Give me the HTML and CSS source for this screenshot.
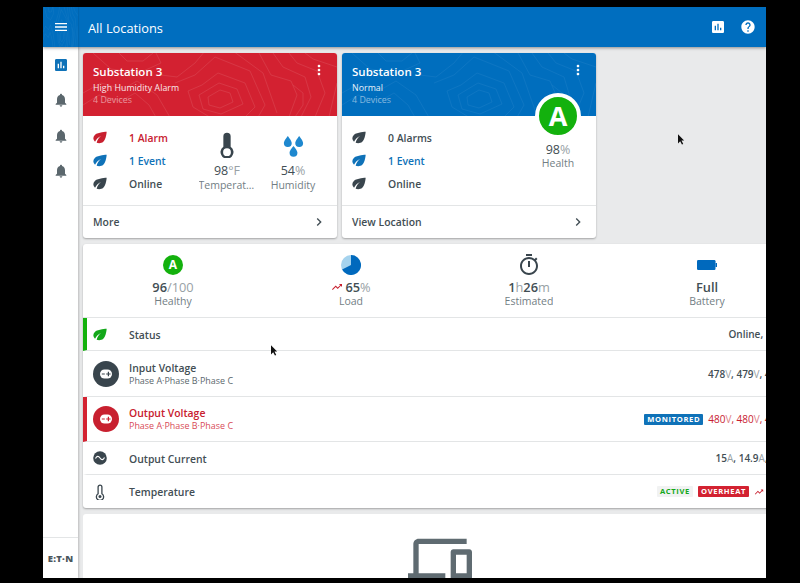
FILE: index.html
```html
<!DOCTYPE html>
<html lang="en">
<head>
<meta charset="utf-8">
<title>All Locations</title>
<link rel="stylesheet" href="styles.css">
</head>
<body>
<svg class="defs" width="0" height="0" aria-hidden="true">
  <defs>
    <symbol id="topo" viewBox="0 0 254 63" preserveAspectRatio="none">
      <g fill="none" stroke="#fff" stroke-width=".6">
        <path d="M125 44l12-7 10 3 3 9-13 6-11-3z"/>
        <path d="M116 42l20-12 18 6 6 15-22 10-18-5z"/>
        <path d="M105 38l14-6 16-12 27 10 10 24-12 12-30 0-20-12z"/>
        <path d="M92 30l20-8 20-18 35 14 15 34-8 14"/>
        <path d="M78 22l16 2 18-14 10-12M150-2l30 22 14 40"/>
        <path d="M0 40l18-10 22 6 14-8 20 14 14 24"/>
        <path d="M0 52l16-10 22 6 14-8 14 12 8 14"/>
        <path d="M10 0l18 16 28 4 22-10-6-12"/>
        <path d="M36 0l8 8 16 0 10-8"/>
        <path d="M176 0l12 22 20 6 6 14-8 22"/>
        <path d="M190 0l10 14 22 10 6 20-10 20"/>
        <path d="M206 0l8 10 20 8 8 22-10 24"/>
        <path d="M222 0l8 6 24 8M254 30l-8 34"/>
        <path d="M210 32l10 8 0 12-8 12"/>
      </g>
    </symbol>
    <symbol id="leaf" viewBox="0 0 24 24" preserveAspectRatio="none"><path d="M6.050 8.050c-2.730 2.730-2.730 7.150-.02 9.880 1.470-3.400 4.090-6.240 7.360-7.930-2.770 2.340-4.710 5.610-5.390 9.320 2.600 1.230 5.800.78 7.950-1.370C19.430 14.470 20 4 20 4S9.530 4.570 6.050 8.050z"/></symbol>
    <symbol id="bell" viewBox="0 0 24 24"><path d="M12 22c1.100 0 2-.9 2-2h-4c0 1.100.89 2 2 2zm6-6v-5c0-3.070-1.640-5.640-4.500-6.320V4c0-.83-.67-1.500-1.500-1.500s-1.500.67-1.500 1.500v.68C7.630 5.360 6 7.920 6 11v5l-2 2v1h16v-1l-2-2z"/></symbol>
    <symbol id="assess" viewBox="0 0 24 24"><path d="M19 3H5c-1.100 0-2 .9-2 2v14c0 1.100.9 2 2 2h14c1.100 0 2-.9 2-2V5c0-1.100-.9-2-2-2zM9 17H7v-7h2v7zm4 0h-2V7h2v10zm4 0h-2v-4h2v4z"/></symbol>
    <symbol id="more" viewBox="0 0 24 24"><path d="M12 8c1.100 0 2-.9 2-2s-.9-2-2-2-2 .9-2 2 .9 2 2 2zm0 2c-1.100 0-2 .9-2 2s.9 2 2 2 2-.9 2-2-.9-2-2-2zm0 6c-1.100 0-2 .9-2 2s.9 2 2 2 2-.9 2-2-.9-2-2-2z"/></symbol>
    <symbol id="chev" viewBox="0 0 24 24"><path d="M10 6L8.590 7.410 13.170 12l-4.580 4.590L10 18l6-6z"/></symbol>
    <symbol id="trend" viewBox="0 0 24 24"><path d="M16 6l2.290 2.290-4.880 4.880-4-4L2 16.590 3.410 18l6-6 4 4 6.300-6.290L22 12V6z"/></symbol>
    <symbol id="thermo" viewBox="0 0 24 32"><path fill-rule="evenodd" d="M12 1a4.500 4.500 0 0 0-4.500 4.500v12.600a8 8 0 1 0 9 0V5.500A4.500 4.500 0 0 0 12 1zM12 20a4.800 4.800 0 1 1 0 9.600 4.800 4.800 0 0 1 0-9.600z"/></symbol>
    <symbol id="volt" viewBox="0 0 26 26"><circle cx="13" cy="13" r="13"/><rect x="7" y="8.500" width="12" height="9" rx="4.500" fill="#fff"/><path d="M8.800 12.400h3v1.200h-3zM13.200 12.400h1.600v-1.600H16v1.600h1.600v1.200H16v1.600h-1.200v-1.600h-1.600z"/></symbol>
    <symbol id="cursor" viewBox="0 0 8 12"><path d="M0 0l7 7H4l2 4-1.500.8L2.500 8 0 10.500z"/></symbol>
  </defs>
</svg>

<div class="frame">
  <header class="topbar">
    <div class="topbar-nav">
      <svg class="topo" aria-hidden="true"><use href="#topo"/></svg>
      <svg class="i16 white" viewBox="0 0 24 24"><path d="M3 18h18v-2H3v2zm0-5h18v-2H3v2zm0-7v2h18V6H3z"/></svg>
    </div>
    <h1 class="topbar-title">All Locations</h1>
    <div class="topbar-actions">
      <svg class="i16 white"><use href="#assess"/></svg>
      <svg class="i16 white" viewBox="0 0 24 24"><path d="M12 2C6.480 2 2 6.480 2 12s4.480 10 10 10 10-4.480 10-10S17.520 2 12 2zm1 17h-2v-2h2v2zm2.070-7.750l-.9.920C13.450 12.900 13 13.500 13 15h-2v-.5c0-1.100.45-2.100 1.170-2.830l1.240-1.260c.37-.36.59-.86.59-1.410 0-1.100-.9-2-2-2s-2 .9-2 2H8c0-2.210 1.790-4 4-4s4 1.790 4 4c0 .88-.36 1.680-.93 2.250z"/></svg>
    </div>
  </header>

  <div class="shell">
    <nav class="rail">
      <ul class="rail-list">
        <li><svg class="i16 blue"><use href="#assess"/></svg></li>
        <li><svg class="i16 slate"><use href="#bell"/></svg></li>
        <li><svg class="i16 slate"><use href="#bell"/></svg></li>
        <li><svg class="i16 slate"><use href="#bell"/></svg></li>
      </ul>
      <div class="rail-foot"><span class="logo">E:T·N</span></div>
    </nav>

    <main class="main">
      <section class="cards">
        <article class="card">
          <div class="card-head red-bg">
            <svg class="topo" aria-hidden="true"><use href="#topo"/></svg>
            <div class="head-text">
              <h2>Substation 3</h2>
              <p>High Humidity Alarm</p>
              <p class="faint">4 Devices</p>
            </div>
            <svg class="i16 white kebab"><use href="#more"/></svg>
          </div>
          <div class="card-body">
            <ul class="status-list">
              <li class="red"><svg class="leaf"><use href="#leaf"/></svg>1 Alarm</li>
              <li class="blue"><svg class="leaf"><use href="#leaf"/></svg>1 Event</li>
              <li><svg class="leaf"><use href="#leaf"/></svg>Online</li>
            </ul>
            <div class="stat">
              <svg class="stat-ic" viewBox="0 0 24 32"><use href="#thermo"/></svg>
              <div class="num">98<span class="unit">°F</span></div>
              <div class="lbl">Temperature</div>
            </div>
            <div class="stat">
              <svg class="stat-ic drops" viewBox="0 0 24 25"><path d="M5.500 1S1 6.500 1 9.200a4.500 4.500 0 0 0 9 0C10 6.500 5.500 1 5.500 1zM18.500 1S14 6.500 14 9.200a4.500 4.500 0 0 0 9 0C23 6.500 18.500 1 18.500 1zM12 12.500s-4.500 5-4.500 7.700a4.500 4.500 0 0 0 9 0c0-2.700-4.500-7.700-4.500-7.700z"/></svg>
              <div class="num">54<span class="unit">%</span></div>
              <div class="lbl">Humidity</div>
            </div>
          </div>
          <div class="card-foot"><span>More</span><svg class="i16"><use href="#chev"/></svg></div>
        </article>

        <article class="card">
          <div class="card-head blue-bg">
            <svg class="topo topo-soft" aria-hidden="true"><use href="#topo"/></svg>
            <div class="head-text">
              <h2>Substation 3</h2>
              <p>Normal</p>
              <p class="faint">4 Devices</p>
            </div>
            <svg class="i16 white kebab"><use href="#more"/></svg>
          </div>
          <div class="card-body">
            <ul class="status-list">
              <li><svg class="leaf"><use href="#leaf"/></svg>0 Alarms</li>
              <li class="blue"><svg class="leaf"><use href="#leaf"/></svg>1 Event</li>
              <li><svg class="leaf"><use href="#leaf"/></svg>Online</li>
            </ul>
            <div class="stat stat-grade">
              <div class="grade">A</div>
              <div class="num">98<span class="unit">%</span></div>
              <div class="lbl">Health</div>
            </div>
          </div>
          <div class="card-foot"><span>View Location</span><svg class="i16"><use href="#chev"/></svg></div>
        </article>
      </section>

      <section class="panel">
        <div class="kpis">
          <div class="kpi">
            <div class="kpi-ic"><span class="grade-sm">A</span></div>
            <div class="kpi-num"><b>96</b><span class="unit">/100</span></div>
            <div class="lbl">Healthy</div>
          </div>
          <div class="kpi">
            <div class="kpi-ic">
              <svg class="i20" viewBox="0 0 20 20"><circle cx="10" cy="10" r="10" fill="#a5d3ee"/><path d="M10 10V0a10 10 0 1 1-8.900 14.500z" fill="#0069bd"/></svg>
            </div>
            <div class="kpi-num"><svg class="i12 red"><use href="#trend"/></svg><b>65</b><span class="unit">%</span></div>
            <div class="lbl">Load</div>
          </div>
          <div class="kpi">
            <div class="kpi-ic">
              <svg class="i24 ink" viewBox="0 0 24 24"><path d="M15 1H9v2h6V1zm-4 13h2V8h-2v6zm8.030-6.610l1.420-1.420c-.43-.51-.9-.99-1.410-1.410l-1.420 1.420C16.070 4.740 14.120 4 12 4c-4.970 0-9 4.030-9 9s4.020 9 9 9 9-4.030 9-9c0-2.120-.74-4.070-1.970-5.610zM12 20c-3.870 0-7-3.130-7-7s3.130-7 7-7 7 3.130 7 7-3.130 7-7 7z"/></svg>
            </div>
            <div class="kpi-num"><b>1</b><span class="unit">h</span><b>26</b><span class="unit">m</span></div>
            <div class="lbl">Estimated</div>
          </div>
          <div class="kpi">
            <div class="kpi-ic">
              <svg class="batt" viewBox="0 0 20 10"><rect width="18.500" height="10" rx="1.200"/><rect x="18.500" y="3" width="1.500" height="4"/></svg>
            </div>
            <div class="kpi-num"><b>Full</b></div>
            <div class="lbl">Battery</div>
          </div>
        </div>

        <div class="row row-s bar-green">
          <div class="row-ic"><svg class="leaf green"><use href="#leaf"/></svg></div>
          <div class="row-text"><div class="row-title">Status</div></div>
          <div class="row-val">Online, ESS+</div>
        </div>
        <div class="row row-l row-in">
          <div class="row-ic"><svg class="i26 ink"><use href="#volt"/></svg></div>
          <div class="row-text">
            <div class="row-title">Input Voltage</div>
            <div class="row-sub">Phase A·Phase B·Phase C</div>
          </div>
          <div class="row-val">478<span class="unit">V</span>, 479<span class="unit">V</span>, 480<span class="unit">V</span></div>
        </div>
        <div class="row row-l bar-red red">
          <div class="row-ic"><svg class="i26 red"><use href="#volt"/></svg></div>
          <div class="row-text">
            <div class="row-title">Output Voltage</div>
            <div class="row-sub">Phase A·Phase B·Phase C</div>
          </div>
          <span class="chip chip-blue">MONITORED</span>
          <div class="row-val">480<span class="unit">V</span>, 480<span class="unit">V</span>, 480<span class="unit">V</span></div>
        </div>
        <div class="row row-s">
          <div class="row-ic">
            <svg class="i14" viewBox="0 0 14 14"><circle cx="7" cy="7" r="6.800" fill="#39454d"/><path d="M2.500 7.500c1.200-2.800 3-2.800 4.500-.5s3.300 2.300 4.500-.5" fill="none" stroke="#fff" stroke-width="1.100"/></svg>
          </div>
          <div class="row-text"><div class="row-title">Output Current</div></div>
          <div class="row-val">15<span class="unit">A</span>, 14.9<span class="unit">A</span>, 15<span class="unit">A</span></div>
        </div>
        <div class="row row-s">
          <div class="row-ic">
            <svg class="thermo-sm" viewBox="0 0 10 16"><path d="M5 1.200a1.900 1.900 0 0 0-1.900 1.900v6.700a3.600 3.600 0 1 0 3.800 0V3.100A1.900 1.900 0 0 0 5 1.200z" fill="#fff" stroke="#39454d" stroke-width="1.300"/><circle cx="5" cy="12.600" r="1.500" fill="#39454d"/></svg>
          </div>
          <div class="row-text"><div class="row-title">Temperature</div></div>
          <span class="chip chip-green">ACTIVE</span>
          <span class="chip chip-red">OVERHEAT</span>
          <svg class="red trend-gap"><use href="#trend"/></svg>
          <div class="row-val">98<span class="unit">°F</span></div>
        </div>
      </section>

      <section class="empty">
        <svg class="devices" viewBox="0 0 24 24"><path d="M4 6h18V4H4c-1.100 0-2 .9-2 2v11H0v3h14v-3H4V6zm19 2h-6c-.55 0-1 .45-1 1v10c0 .55.45 1 1 1h6c.55 0 1-.45 1-1V9c0-.55-.45-1-1-1zm-1 9h-4v-7h4v7z"/></svg>
      </section>
    </main>
  </div>

  <svg class="cursor cursor-a"><use href="#cursor"/></svg>
  <svg class="cursor cursor-b"><use href="#cursor"/></svg>
</div>
</body>
</html>
```
FILE: styles.css
```css
* { box-sizing: border-box; }
html, body { margin: 0; height: 100%; background: #000; overflow: hidden; }
body {
  font-family: "Open Sans", "Noto Sans", sans-serif;
  color: #424e54;
  padding: 7px 34px 5px 43px;
}
ul { list-style: none; margin: 0; padding: 0; }
h1, h2, p { margin: 0; font-weight: 400; }
svg { display: block; flex: none; fill: currentColor; }
.defs { position: absolute; }

.i12 { width: 12px; height: 12px; }
.i14 { width: 14px; height: 14px; }
.i16 { width: 16px; height: 16px; }
.i20 { width: 20px; height: 20px; }
.i24 { width: 24px; height: 24px; }
.i26 { width: 26px; height: 26px; }
.leaf { width: 20px; height: 17px; }
.white { color: #fff; }
.blue { color: #0f72b8; }
.red { color: #c8202f; }
.green { color: #13a81a; }
.slate { color: #5b676d; }
.ink { color: #39454d; }

.frame {
  position: relative;
  height: 100%;
  display: flex;
  flex-direction: column;
  background: #e9eaeb;
  overflow: hidden;
}

.topbar {
  position: relative;
  z-index: 2;
  height: 40px;
  flex: none;
  display: flex;
  align-items: center;
  background: #006ebf;
  color: #fff;
  box-shadow: 0 1px 3px rgba(0, 0, 0, .4);
}
.topbar-nav {
  position: relative;
  width: 35px;
  height: 100%;
  display: flex;
  align-items: center;
  justify-content: center;
  box-shadow: 1px 0 1px rgba(0, 0, 0, .08);
}
.topbar-title { margin: 1px 0 0 10px; font-size: 12.800px; line-height: 18px; }
.topbar-actions { margin-left: auto; margin-right: 10px; display: flex; gap: 14px; }
.topo { position: absolute; inset: 0; width: 100%; height: 100%; opacity: .16; }
.topo-soft { opacity: .09; }

.shell { flex: 1; min-height: 0; display: flex; }

.rail {
  width: 35px;
  flex: none;
  display: flex;
  flex-direction: column;
  background: #fff;
  box-shadow: 1px 0 2px rgba(0, 0, 0, .2);
}
.rail-list { flex: 1; }
.rail-list li { height: 35.500px; display: flex; align-items: center; justify-content: center; }
.rail-foot {
  height: 41px;
  border-top: 1px solid #e3e5e6;
  display: flex;
  align-items: center;
  justify-content: center;
}
.logo { font-size: 9.500px; font-weight: 800; letter-spacing: .3px; color: #4b565c; }

.main { flex: 1; min-width: 0; padding: 6px 0 0 5px; display: flex; flex-direction: column; gap: 6px; }

.cards { display: flex; gap: 5px; }
.card {
  width: 254px;
  height: 185px;
  background: #fff;
  border-radius: 3px;
  box-shadow: 0 1px 2px rgba(0, 0, 0, .3);
  display: flex;
  flex-direction: column;
}
.card-head {
  position: relative;
  height: 63px;
  flex: none;
  padding: 11px 10px;
  color: #fff;
  border-radius: 3px 3px 0 0;
  display: flex;
  justify-content: space-between;
  overflow: hidden;
}
.red-bg { background: #d32231; }
.blue-bg { background: #006ebf; }
.head-text { position: relative; }
.head-text h2 { font-size: 11.500px; font-weight: 550; line-height: 15px; margin-bottom: 3px; }
.head-text p { font-size: 8.800px; line-height: 12px; opacity: .9; letter-spacing: .05px; }
.head-text .faint { opacity: .5; }
.kebab { position: relative; margin-top: -2px; }

.card-body { flex: 1; display: flex; padding: 10px 5px 0 10px; min-height: 0; border-bottom: 1px solid #e3e5e6; }
.status-list { flex: 1; }
.status-list li {
  height: 23px;
  display: flex;
  align-items: center;
  gap: 19px;
  font-size: 10.400px;
  font-weight: 550;
}
.status-list li svg { margin-left: -3px; }
.status-list li:not(.red):not(.blue) svg { color: #39454d; }
.status-list .red { color: #c8202f; }
.status-list .blue { color: #0f72b8; }

.stat { width: 66px; display: flex; flex-direction: column; align-items: center; text-align: center; }
.stat:last-child { margin-right: 6px; }
.stat-ic { width: 24px; height: 26px; color: #39454d; margin-top: 6px; }
.drops { color: #1e88cf; width: 21px; height: 22px; margin: 9px 0 1px; }
.num { font-size: 12.500px; line-height: 15px; margin-top: 5px; }
.unit { color: #98a1a5; font-weight: 400; }
.lbl {
  font-size: 10.500px;
  line-height: 14px;
  color: #727e84;
  width: 57px;
  white-space: nowrap;
  overflow: hidden;
  text-overflow: ellipsis;
}
.stat-grade { position: relative; margin-top: -33px; }
.stat-grade:last-child { margin-right: 0; }
.grade {
  width: 46px;
  height: 46px;
  border-radius: 50%;
  background: #13b10d;
  border: 4px solid #fff;
  color: #fff;
  font-size: 27px;
  font-weight: 700;
  line-height: 37px;
  text-align: center;
}
.stat-grade .num { margin-top: 4px; line-height: 14px; }
.stat-grade .lbl { margin-top: -1px; }

.card-foot {
  height: 32px;
  flex: none;
  padding: 0 10px;
  display: flex;
  align-items: center;
  justify-content: space-between;
  font-size: 10.400px;
  font-weight: 550;
}

.panel {
  width: 713px;
  flex: none;
  background: #fff;
  border-radius: 3px;
  box-shadow: 0 1px 2px rgba(0, 0, 0, .3);
  overflow: hidden;
}
.kpis { display: flex; height: 74px; padding-left: 1px; border-bottom: 1px solid #e3e5e6; }
.kpi { width: 178px; display: flex; flex-direction: column; align-items: center; padding-top: 10px; }
.kpi .lbl { width: auto; margin-top: -2px; }
.kpi-ic { height: 22px; display: flex; align-items: center; justify-content: center; }
.kpi-num { font-size: 12.800px; line-height: 18px; margin-top: 2px; display: flex; align-items: center; }
.kpi-num b { font-weight: 550; }
.kpi-num svg { margin-right: 2px; }
.grade-sm {
  width: 20px;
  height: 20px;
  border-radius: 50%;
  background: #13b10d;
  color: #fff;
  font-size: 12px;
  font-weight: 700;
  line-height: 20px;
  text-align: center;
}
.batt { width: 20px; height: 10px; color: #0069bd; }

.row {
  display: flex;
  align-items: center;
  padding-right: 8px;
  border-bottom: 1px solid #e3e5e6;
  border-left: 4px solid transparent;
}
.row:last-child { border-bottom: 0; }
.row-s { height: 33px; }
.row-l { height: 45px; }
.row-in { height: 46px; }
.bar-green { border-left-color: #13b10d; }
.bar-red { border-left-color: #d32231; }
.row-ic { width: 42px; padding-left: 6px; display: flex; align-items: center; }
.row-ic .leaf { margin-left: -3px; }
.row-text { flex: 1; }
.row-s .row-text { padding-top: 1px; }
.row-title { font-size: 10.400px; line-height: 14px; font-weight: 550; }
.row-sub { font-size: 8.950px; line-height: 12px; color: #5b676d; }
.bar-red .row-sub { color: #d84b57; }
.row-val { font-size: 10px; font-weight: 550; white-space: nowrap; }
.row.red .row-val { font-weight: 500; }
.row.red .unit { color: #dd7f87; }
.thermo-sm { width: 10px; height: 16px; margin-left: 2px; }

.chip {
  font-size: 7.600px;
  font-weight: 700;
  letter-spacing: .65px;
  line-height: 11px;
  padding: 0 3px;
  border-radius: 1px;
  margin-right: 5px;
}
.chip-blue { background: #0f72b8; color: #fff; }
.chip-red { background: #d32231; color: #fff; }
.chip-green { background: #f1f2f2; color: #13a81a; }
.trend-gap { margin-right: 3px; width: 10px; height: 10px; }

.empty {
  width: 713px;
  flex: 1;
  min-height: 70px;
  background: #fff;
  border-radius: 3px 3px 0 0;
  display: flex;
  justify-content: center;
  overflow: hidden;
}
.devices { width: 64px; height: 64px; margin-top: 14px; color: #5f6b71; }

.cursor { position: absolute; width: 7px; height: 11px; color: #111; z-index: 3; }
.cursor-a { left: 635px; top: 127px; }
.cursor-b { left: 228px; top: 338px; }
```
